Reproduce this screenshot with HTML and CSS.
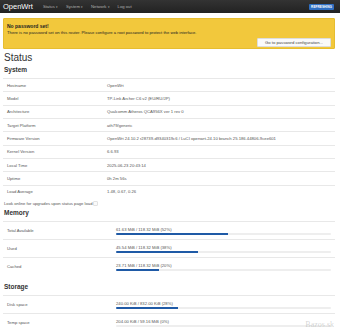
FILE: index.html
```html
<!DOCTYPE html>
<html lang="en">
  <head>
    <meta charset="UTF-8" />
    <meta name="viewport" content="width=device-width, initial-scale=1.0" />
    <title>Overview - LuCI</title>
    <link rel="stylesheet" href="styles.css">
  </head>
  <body>
    <header class="topbar">
      <a class="brand" href="#">OpenWrt</a>
      <ul class="nav">
        <li>Status <span class="caret">&#9662;</span></li>
        <li>System <span class="caret">&#9662;</span></li>
        <li>Network <span class="caret">&#9662;</span></li>
        <li>Log out</li>
      </ul>
      <span class="indicator">REFRESHING</span>
    </header>

    <div class="alert">
      <h4>No password set!</h4>
      <p>There is no password set on this router. Please configure a root password to protect the web interface.</p>
      <div class="alert-actions">
        <button type="button">Go to password configuration...</button>
      </div>
    </div>

    <div class="main">
      <h2>Status</h2>

      <h3>System</h3>
      <div class="table system">
        <div class="tr"><div class="td">Hostname</div><div class="td">OpenWrt</div></div>
        <div class="tr"><div class="td">Model</div><div class="td">TP-Link Archer C6 v2 (EU/RU/JP)</div></div>
        <div class="tr"><div class="td">Architecture</div><div class="td">Qualcomm Atheros QCA956X ver 1 rev 0</div></div>
        <div class="tr"><div class="td">Target Platform</div><div class="td">ath79/generic</div></div>
        <div class="tr"><div class="td">Firmware Version</div><div class="td">OpenWrt 24.10.2 r28739-d9340319c6 / LuCI openwrt-24.10 branch 25.186.44806-9cee601</div></div>
        <div class="tr"><div class="td">Kernel Version</div><div class="td">6.6.93</div></div>
        <div class="tr"><div class="td">Local Time</div><div class="td">2025-06-23 20:43:14</div></div>
        <div class="tr"><div class="td">Uptime</div><div class="td">0h 2m 56s</div></div>
        <div class="tr"><div class="td">Load Average</div><div class="td">1.48, 0.67, 0.26</div></div>
      </div>

      <label class="check">Look online for upgrades upon status page load <input type="checkbox"></label>

      <h3>Memory</h3>
      <div class="table usage">
        <div class="tr">
          <div class="td">Total Available</div>
          <div class="td"><div class="value">61.63 MiB / 118.32 MiB (52%)</div><div class="bar"><div class="fill" style="width: 52%"></div></div></div>
        </div>
        <div class="tr">
          <div class="td">Used</div>
          <div class="td"><div class="value">45.54 MiB / 118.32 MiB (38%)</div><div class="bar"><div class="fill" style="width: 38%"></div></div></div>
        </div>
        <div class="tr">
          <div class="td">Cached</div>
          <div class="td"><div class="value">23.71 MiB / 118.32 MiB (20%)</div><div class="bar"><div class="fill" style="width: 20%"></div></div></div>
        </div>
      </div>

      <h3 class="storage-title">Storage</h3>
      <div class="table usage">
        <div class="tr">
          <div class="td">Disk space</div>
          <div class="td"><div class="value">240.00 KiB / 832.00 KiB (28%)</div><div class="bar"><div class="fill" style="width: 29%"></div></div></div>
        </div>
        <div class="tr">
          <div class="td">Temp space</div>
          <div class="td"><div class="value">204.00 KiB / 59.16 MiB (0%)</div><div class="bar"><div class="fill" style="width: 0%"></div></div></div>
        </div>
      </div>
    </div>

    <div class="watermark">Bazos.sk</div>
  </body>
</html>
```

FILE: styles.css
```css
body {
  font-family: "Liberation Sans", Arial, sans-serif;
  margin: 0;
  padding: 0;
  color: #404040;
  background-color: #fff;
}

.topbar {
  display: flex;
  align-items: center;
  height: 13px;
  padding: 0 4px 0 3px;
  background: linear-gradient(#333, #222);
  box-sizing: border-box;
}

.brand {
  font-size: 7.5px;
  color: #fff;
  text-decoration: none;
  margin-right: 10px;
}

.nav {
  display: flex;
  list-style: none;
  margin: 0;
  padding: 0;
  gap: 8px;
  flex: 1;
}

.nav li {
  font-size: 4.2px;
  color: #b0b0b0;
}

.caret {
  font-size: 3px;
}

.indicator {
  font-size: 3.2px;
  font-weight: bold;
  color: #fff;
  background-color: #2f6fc3;
  padding: 1px 2px;
  border-radius: 1px;
  margin-right: 2px;
}

.alert {
  margin: 5px 5px 0 3px;
  height: 31px;
  padding: 4px 3px 0 3px;
  background-color: #f2c83c;
  border: 1px solid #e6bd30;
  border-radius: 1px;
  box-sizing: border-box;
  color: #222;
}

.alert h4 {
  font-size: 5px;
  line-height: 6px;
  margin: 0;
}

.alert p {
  font-size: 4.2px;
  line-height: 6px;
  margin: 1px 0 0 0;
}

.alert-actions {
  display: flex;
  justify-content: flex-end;
  margin-top: 2px;
}

.alert-actions button {
  font-family: "Liberation Sans", Arial, sans-serif;
  font-size: 4.2px;
  height: 9px;
  width: 74px;
  padding: 0;
  color: #444;
  background-color: #fafafa;
  border: 1px solid #ddd;
  border-radius: 1px;
}

.main {
  padding: 0 5px 0 3px;
}

h2 {
  font-size: 10px;
  font-weight: normal;
  line-height: 10px;
  color: #333;
  margin: 4px 0 0 1px;
}

h3 {
  font-size: 6.5px;
  font-weight: bold;
  line-height: 8px;
  color: #333;
  margin: 3px 0 0 1px;
}

.table {
  margin-top: 4px;
}

.tr {
  display: grid;
  align-items: center;
  height: 13.35px;
  border-top: 1px solid #e8e8e8;
  box-sizing: border-box;
  font-size: 4.2px;
  color: #555;
}

.system .tr {
  grid-template-columns: 104px 1fr;
}

.td:first-child {
  padding-left: 4px;
}

.check {
  display: flex;
  align-items: center;
  gap: 1px;
  height: 6px;
  margin: 2px 0 0 1px;
  font-size: 4.2px;
  color: #555;
}

.check input {
  width: 5px;
  height: 5px;
  margin: 0;
  appearance: none;
  border: 1px solid #e2e2e2;
  border-radius: 1px;
  background-color: #fafafa;
}

.usage .tr {
  grid-template-columns: 113px 1fr;
  height: 18px;
}

.usage .td:last-child {
  padding-right: 4px;
}

.value {
  line-height: 5px;
}

.bar {
  height: 2px;
  margin-top: 1px;
  background-color: #eee;
  border-radius: 1px;
  overflow: hidden;
}

.fill {
  height: 100%;
  background-color: #1f5aa6;
}

.storage-title {
  margin-top: 8px;
}

.watermark {
  position: absolute;
  right: 6px;
  bottom: 6px;
  font-family: "Liberation Serif", serif;
  font-size: 8px;
  color: rgba(160, 160, 160, 0.45);
}
```
